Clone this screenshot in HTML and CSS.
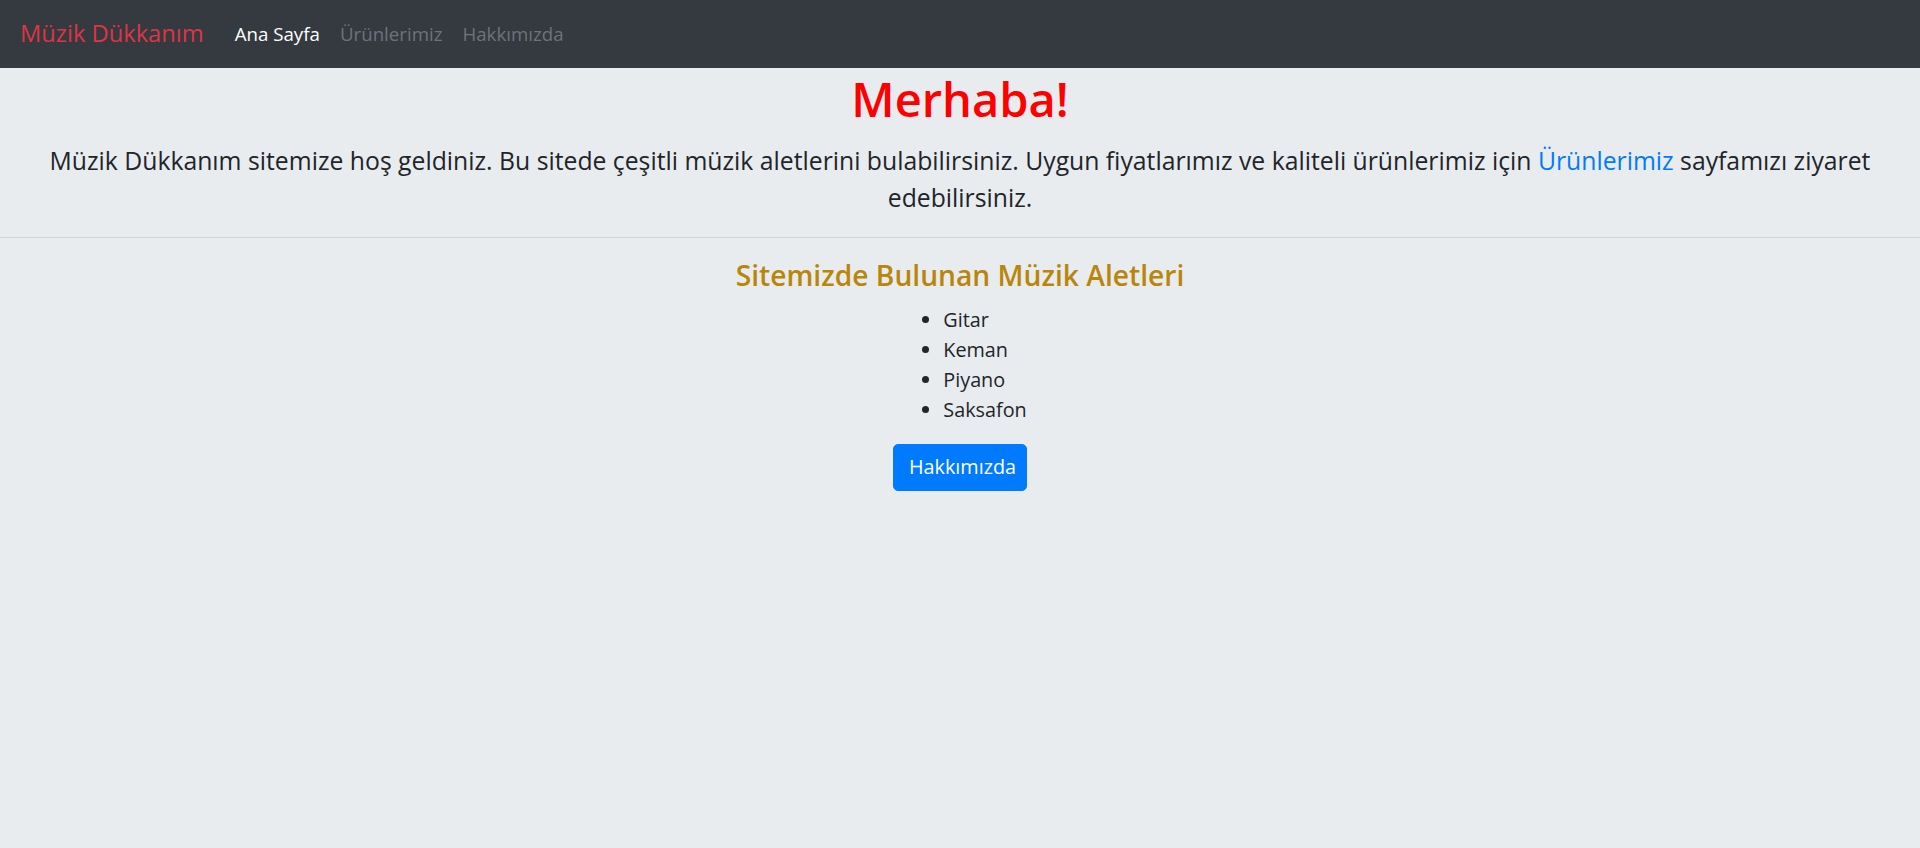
FILE: index.html
```html
<!DOCTYPE html>
<html lang="tr">
<head>
<meta charset="utf-8">
<title>Müzik Dükkanım</title>
<link rel="stylesheet" href="styles.css">
</head>
<body>
<nav class="navbar">
  <a class="brand" href="#">Müzik Dükkanım</a>
  <ul class="nav-links">
    <li><a class="nav-link active" href="#">Ana Sayfa</a></li>
    <li><a class="nav-link" href="#">Ürünlerimiz</a></li>
    <li><a class="nav-link" href="#">Hakkımızda</a></li>
  </ul>
</nav>
<main class="content">
  <header class="intro">
    <h1 class="title">Merhaba!</h1>
    <p class="lead">Müzik Dükkanım sitemize hoş geldiniz. Bu sitede çeşitli müzik aletlerini bulabilirsiniz. Uygun fiyatlarımız ve kaliteli ürünlerimiz için <a class="inline-link" href="#">Ürünlerimiz</a> sayfamızı ziyaret edebilirsiniz.</p>
  </header>
  <hr class="divider">
  <section class="instruments">
    <h3 class="section-title">Sitemizde Bulunan Müzik Aletleri</h3>
    <ul class="instrument-list">
      <li>Gitar</li>
      <li>Keman</li>
      <li>Piyano</li>
      <li>Saksafon</li>
    </ul>
    <div class="actions">
      <a class="btn" href="#">Hakkımızda</a>
    </div>
  </section>
</main>
</body>
</html>
```
FILE: styles.css
```css
* { box-sizing: border-box; }
html, body { height: 100%; }
body {
  margin: 0;
  background: #e9ecef;
  color: #212529;
  font-family: "Open Sans", "Noto Sans", sans-serif;
  font-size: 19.8px;
  line-height: 1.5;
}
a { text-decoration: none; }

.navbar {
  height: 68px;
  background: #343a40;
  display: flex;
  align-items: center;
  padding: 0 20px;
}
.brand {
  color: #dc3545;
  font-size: 23.7px;
  line-height: 37.5px;
  margin-right: 21px;
}
.nav-links {
  display: flex;
  list-style: none;
  margin: 0;
  padding: 0;
}
.nav-link {
  display: block;
  padding: 0 10px;
  line-height: 30px;
  font-size: 18.7px;
  color: #6c737b;
}
.nav-link.active { color: #fff; }

.content { text-align: center; }
.intro { padding-top: 1px; }
.title {
  margin: 0 0 12.5px;
  font-size: 47px;
  line-height: 60px;
  font-weight: 600;
  color: #ff0000;
}
.lead {
  margin: 0;
  padding: 0 15px;
  font-size: 24.75px;
  line-height: 37.5px;
}
.inline-link { color: #007bff; }

.divider {
  margin: 20.5px 0 0;
  border: 0;
  border-top: 1px solid rgba(0, 0, 0, 0.1);
}

.instruments { padding-top: 21px; }
.section-title {
  margin: 0 0 12px;
  font-size: 28.2px;
  line-height: 33.6px;
  font-weight: 600;
  color: #b8860b;
}
.instrument-list {
  display: inline-block;
  text-align: left;
  margin: 0 0 19px;
  padding-left: 50px;
  line-height: 30px;
}
.actions { display: flex; justify-content: center; }
.btn {
  display: inline-block;
  background: #007bff;
  color: #fff;
  border: 1px solid #007bff;
  border-radius: 5px;
  padding: 7.5px 15px;
  font-size: 19.8px;
  line-height: 30px;
  width: 134px;
  text-align: center;
}
```
